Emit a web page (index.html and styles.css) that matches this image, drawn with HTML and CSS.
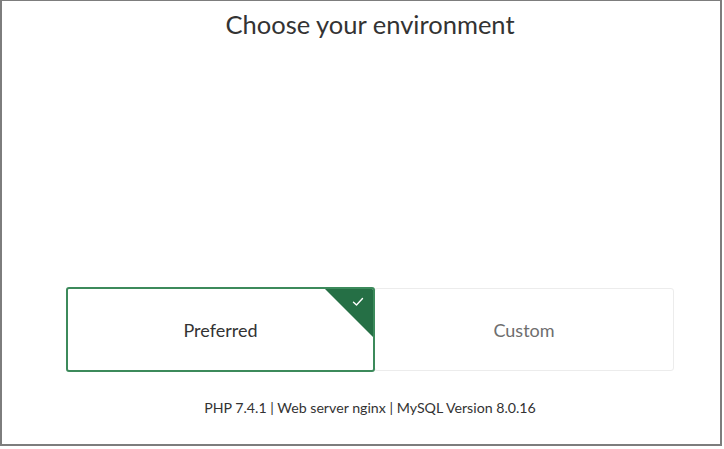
FILE: index.html
```html
<!DOCTYPE html>
<html>
<head>
<meta charset="utf-8">
<link rel="stylesheet" href="styles.css">
</head>
<body>
<div class="frame">
  <h1 class="title">Choose your environment</h1>
  <div class="choices">
    <div class="card selected">
      <span class="label">Preferred</span>
      <span class="corner">
        <svg class="check" width="12" height="10" viewBox="0 0 12 10"><path d="M1.5 5.2 L4.5 8 L10.5 1.5" fill="none" stroke="#fff" stroke-width="1.4" stroke-linecap="round" stroke-linejoin="round"/></svg>
      </span>
    </div>
    <div class="card other">
      <span class="label">Custom</span>
    </div>
  </div>
  <p class="footer">PHP 7.4.1 | Web server nginx | MySQL Version 8.0.16</p>
</div>
</body>
</html>
```
FILE: styles.css
```css
html, body {
  margin: 0;
  padding: 0;
  background: #fff;
}
.frame {
  width: 722px;
  height: 446px;
  box-sizing: border-box;
  border: 2px solid #7d7d7d;
  border-top-width: 1px;
  display: flex;
  flex-direction: column;
  font-family: Lato, "Open Sans", sans-serif;
  padding: 0 46px 0 64px;
}
.title {
  margin: 7px 0 0;
  font-size: 25.5px;
  line-height: 32px;
  font-weight: 400;
  color: #333;
  text-align: center;
}
.choices {
  margin-top: auto;
  display: flex;
  height: 85px;
}
.card {
  box-sizing: border-box;
  display: flex;
  align-items: center;
  justify-content: center;
  border-radius: 3px;
  position: relative;
  overflow: hidden;
}
.card.selected {
  width: 309px;
  border: 2px solid #3c8a5b;
  z-index: 1;
}
.card.other {
  flex: 1;
  margin-left: -1px;
  margin-top: 1px;
  height: 83px;
  border: 1px solid #ececec;
}
.label {
  font-size: 18px;
  color: #333;
}
.other .label {
  color: #6e6e6e;
}
.corner {
  position: absolute;
  top: -2px;
  right: -2px;
  width: 52px;
  height: 52px;
  background: #256f45;
  clip-path: polygon(0 0, 100% 0, 100% 100%);
}
.check {
  position: absolute;
  top: 10px;
  right: 11px;
}
.footer {
  margin: 27px 0 27px;
  font-size: 14.2px;
  line-height: 18px;
  color: #333;
  text-align: center;
}
```
